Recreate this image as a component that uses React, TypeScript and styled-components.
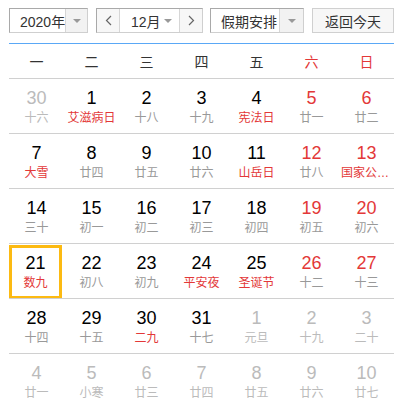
import styled, { createGlobalStyle } from 'styled-components';

const GlobalStyle = createGlobalStyle`
  body {
    margin: 0;
    background: #fff;
    font-family: "Liberation Sans", "Noto Sans CJK SC", sans-serif;
  }
`;

const Page = styled.div`
  width: 385px;
  padding: 8px 0 0 9px;
`;

const Toolbar = styled.div`
  display: flex;
  height: 25px;
  font-size: 14px;
  color: #333;
`;

const SelectBox = styled.div<{ $w: number; $ml?: number }>`
  display: flex;
  box-sizing: border-box;
  width: ${(p) => p.$w}px;
  margin-left: ${(p) => p.$ml ?? 0}px;
  height: 25px;
  border: 1px solid;
  border-color: #a9a9a9 #cfcfcf #cfcfcf #a9a9a9;
  background: #fff;
`;

const SelectText = styled.div`
  flex: 1;
  display: flex;
  align-items: center;
  padding-left: 10px;
  white-space: nowrap;
`;

const ArrowCell = styled.div`
  width: 23px;
  display: flex;
  align-items: center;
  justify-content: center;
  border-left: 1px solid #d6d6d6;
  background: #f2f2f2;
`;

const Caret = styled.span`
  width: 0;
  height: 0;
  border-left: 4px solid transparent;
  border-right: 4px solid transparent;
  border-top: 4px solid #999;
`;

const NavBtn = styled.div`
  width: 22px;
  display: flex;
  align-items: center;
  justify-content: center;
  background: #f7f7f7;
`;

const MonthCell = styled.div`
  flex: 1;
  display: flex;
  align-items: center;
  justify-content: space-between;
  padding: 0 7px 0 11px;
  border-left: 1px solid #d6d6d6;
  border-right: 1px solid #d6d6d6;
`;

const TodayBtn = styled.div`
  box-sizing: border-box;
  width: 82px;
  margin-left: 8px;
  display: flex;
  align-items: center;
  justify-content: center;
  border: 1px solid #d0d0d0;
  background: #f7f7f7;
`;

const WeekHead = styled.div`
  display: grid;
  grid-template-columns: repeat(7, 55px);
  margin-top: 10px;
  height: 34px;
  border-top: 1px solid #5aa8f6;
  border-bottom: 1px solid #d0d0d0;
`;

const WeekLabel = styled.div<{ $red?: boolean }>`
  display: flex;
  align-items: center;
  justify-content: center;
  font-size: 14px;
  color: ${(p) => (p.$red ? '#e33838' : '#333')};
`;

const Row = styled.div`
  display: grid;
  grid-template-columns: repeat(7, 55px);
  height: 54px;
  border-bottom: 1px solid #d0d0d0;
`;

const Cell = styled.div<{ $sel?: boolean }>`
  box-sizing: border-box;
  display: flex;
  flex-direction: column;
  align-items: center;
  padding-top: ${(p) => (p.$sel ? 4 : 8)}px;
  ${(p) => (p.$sel ? 'margin: 1px 2px 0 0; border: 3px solid #fcba12; border-bottom-width: 2px;' : '')}
`;

const DayNum = styled.div<{ $tone: string }>`
  font-size: 18px;
  line-height: 22px;
  color: ${(p) => p.$tone};
`;

const Lunar = styled.div<{ $tone: string }>`
  margin-top: 1px;
  max-width: 51px;
  font-size: 12px;
  line-height: 16px;
  white-space: nowrap;
  overflow: hidden;
  text-overflow: ellipsis;
  color: ${(p) => p.$tone};
`;

type Day = { d: number; l: string; other?: boolean; fest?: boolean; sel?: boolean };

const rows: Day[][] = [
  [
    { d: 30, l: '十六', other: true },
    { d: 1, l: '艾滋病日', fest: true },
    { d: 2, l: '十八' },
    { d: 3, l: '十九' },
    { d: 4, l: '宪法日', fest: true },
    { d: 5, l: '廿一' },
    { d: 6, l: '廿二' },
  ],
  [
    { d: 7, l: '大雪', fest: true },
    { d: 8, l: '廿四' },
    { d: 9, l: '廿五' },
    { d: 10, l: '廿六' },
    { d: 11, l: '山岳日', fest: true },
    { d: 12, l: '廿八' },
    { d: 13, l: '国家公祭日', fest: true },
  ],
  [
    { d: 14, l: '三十' },
    { d: 15, l: '初一' },
    { d: 16, l: '初二' },
    { d: 17, l: '初三' },
    { d: 18, l: '初四' },
    { d: 19, l: '初五' },
    { d: 20, l: '初六' },
  ],
  [
    { d: 21, l: '数九', fest: true, sel: true },
    { d: 22, l: '初八' },
    { d: 23, l: '初九' },
    { d: 24, l: '平安夜', fest: true },
    { d: 25, l: '圣诞节', fest: true },
    { d: 26, l: '十二' },
    { d: 27, l: '十三' },
  ],
  [
    { d: 28, l: '十四' },
    { d: 29, l: '十五' },
    { d: 30, l: '二九', fest: true },
    { d: 31, l: '十七' },
    { d: 1, l: '元旦', other: true },
    { d: 2, l: '十九', other: true },
    { d: 3, l: '二十', other: true },
  ],
  [
    { d: 4, l: '廿一', other: true },
    { d: 5, l: '小寒', other: true },
    { d: 6, l: '廿三', other: true },
    { d: 7, l: '廿四', other: true },
    { d: 8, l: '廿五', other: true },
    { d: 9, l: '廿六', other: true },
    { d: 10, l: '廿七', other: true },
  ],
];

const weekdays = ['一', '二', '三', '四', '五', '六', '日'];

const Chevron = ({ dir }: { dir: 'l' | 'r' }) => (
  <svg width="7" height="11" viewBox="0 0 7 11">
    <polyline
      points={dir === 'l' ? '6,1 1.5,5.5 6,10' : '1,1 5.5,5.5 1,10'}
      fill="none"
      stroke="#666"
      strokeWidth="1.2"
    />
  </svg>
);

const App = () => {
  return (
    <>
      <GlobalStyle />
      <Page>
        <Toolbar>
          <SelectBox $w={79}>
            <SelectText>2020年</SelectText>
            <ArrowCell>
              <Caret />
            </ArrowCell>
          </SelectBox>
          <SelectBox $w={107} $ml={8}>
            <NavBtn>
              <Chevron dir="l" />
            </NavBtn>
            <MonthCell>
              12月
              <Caret />
            </MonthCell>
            <NavBtn>
              <Chevron dir="r" />
            </NavBtn>
          </SelectBox>
          <SelectBox $w={94} $ml={7}>
            <SelectText>假期安排</SelectText>
            <ArrowCell>
              <Caret />
            </ArrowCell>
          </SelectBox>
          <TodayBtn>返回今天</TodayBtn>
        </Toolbar>
        <WeekHead>
          {weekdays.map((w, i) => (
            <WeekLabel key={w} $red={i >= 5}>
              {w}
            </WeekLabel>
          ))}
        </WeekHead>
        {rows.map((row, ri) => (
          <Row key={ri}>
            {row.map((day, ci) => {
              const weekend = ci >= 5;
              const numTone = day.other ? '#bbb' : weekend ? '#e33838' : '#000';
              const lunarTone = day.other ? '#bbb' : day.fest ? '#e33838' : '#999';
              return (
                <Cell key={ci} $sel={day.sel}>
                  <DayNum $tone={numTone}>{day.d}</DayNum>
                  <Lunar $tone={lunarTone}>{day.l}</Lunar>
                </Cell>
              );
            })}
          </Row>
        ))}
      </Page>
    </>
  );
};

export default App;
